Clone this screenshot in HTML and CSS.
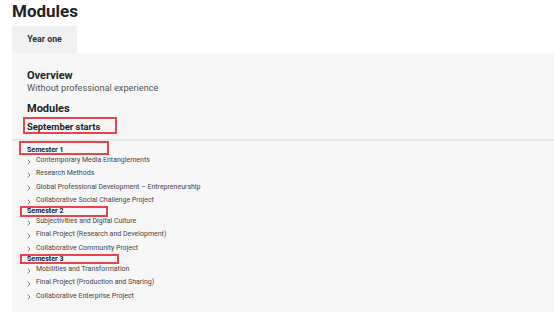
FILE: index.html
```html
<!DOCTYPE html>
<html lang="en">
<head>
    <meta charset="UTF-8">
    <title>Modules</title>
    <link rel="stylesheet" href="styles.css">
</head>
<body>
    <h1 class="page_title">Modules</h1>
    <div class="tabs">
        <div class="tab">Year one</div>
    </div>
    <div class="panel">
        <div class="intro">
            <h2>Overview</h2>
            <p>Without professional experience</p>
            <h3>Modules</h3>
            <h4 class="start">September starts<span class="mark mark_start"></span></h4>
        </div>
        <div class="list">
            <div class="semester">Semester 1<span class="mark mark_s1"></span></div>
            <ul>
                <li><svg class="chev" viewBox="0 0 4 6"><polyline points="0.7,0.7 3,3 0.7,5.3"/></svg>Contemporary Media Entanglements</li>
                <li><svg class="chev" viewBox="0 0 4 6"><polyline points="0.7,0.7 3,3 0.7,5.3"/></svg>Research Methods</li>
                <li><svg class="chev" viewBox="0 0 4 6"><polyline points="0.7,0.7 3,3 0.7,5.3"/></svg>Global Professional Development – Entrepreneurship</li>
                <li><svg class="chev" viewBox="0 0 4 6"><polyline points="0.7,0.7 3,3 0.7,5.3"/></svg>Collaborative Social Challenge Project</li>
            </ul>
            <div class="semester">Semester 2<span class="mark mark_s2"></span></div>
            <ul>
                <li><svg class="chev" viewBox="0 0 4 6"><polyline points="0.7,0.7 3,3 0.7,5.3"/></svg>Subjectivities and Digital Culture</li>
                <li><svg class="chev" viewBox="0 0 4 6"><polyline points="0.7,0.7 3,3 0.7,5.3"/></svg>Final Project (Research and Development)</li>
                <li><svg class="chev" viewBox="0 0 4 6"><polyline points="0.7,0.7 3,3 0.7,5.3"/></svg>Collaborative Community Project</li>
            </ul>
            <div class="semester">Semester 3<span class="mark mark_s3"></span></div>
            <ul>
                <li><svg class="chev" viewBox="0 0 4 6"><polyline points="0.7,0.7 3,3 0.7,5.3"/></svg>Mobilities and Transformation</li>
                <li><svg class="chev" viewBox="0 0 4 6"><polyline points="0.7,0.7 3,3 0.7,5.3"/></svg>Final Project (Production and Sharing)</li>
                <li><svg class="chev" viewBox="0 0 4 6"><polyline points="0.7,0.7 3,3 0.7,5.3"/></svg>Collaborative Enterprise Project</li>
            </ul>
        </div>
    </div>
</body>
</html>
```

FILE: styles.css
```css
*{
    margin:0;padding:0;
    box-sizing: border-box;
}
html,body{
    background-color: #fff;
    color:#222;
    font-family: Roboto, "Liberation Sans", sans-serif;
}
ul,li{
    list-style: none;
}
/* header + tab */
.page_title{
    padding-left: 12px;
    font-size: 17px;
    line-height: 22px;
    font-weight: 700;
    color:#222;
}
.tabs{
    display: flex;
    margin-top: 4px;
    padding-left: 12px;
}
.tab{
    width:65px;
    height:27px;
    line-height: 27px;
    text-align: center;
    font-size: 8.8px;
    font-weight: 700;
    color:#333;
    background-color: #f0f1f3;
}
/* panel */
.panel{
    margin-left: 12px;
    min-height: 260px;
    background-color: #f7f7f7;
}
.intro{
    padding:16px 15px 6px;
}
.intro h2{
    font-size: 11px;
    line-height: 13px;
    font-weight: 700;
}
.intro p{
    font-size: 9.2px;
    line-height: 12px;
    color:#555;
}
.intro h3{
    margin-top: 8px;
    font-size: 11px;
    line-height: 13px;
    font-weight: 700;
}
.start{
    position: relative;
    margin-top: 6px;
    font-size: 9.4px;
    line-height: 12px;
    font-weight: 700;
}
.list{
    border-top:2px solid #e6e6e6;
    padding:5px 15px 20px;
}
.semester{
    position: relative;
    font-size: 7.1px;
    line-height: 8px;
    font-weight: 700;
    color:#222;
}
.list li{
    display: flex;
    align-items: center;
    font-size: 7px;
    line-height: 13.3px;
    color:#464646;
}
.chev{
    width:4px;
    height:6px;
    margin:2px 5px 0 0;
    fill:none;
    stroke:#777;
    stroke-width: 0.9;
}
/* red annotation boxes */
.mark{
    position: absolute;
    border:2px solid #e9434b;
}
.mark_start{
    left:-4px;
    top:-4.5px;
    width:94px;
    height:17px;
}
.mark_s1{
    left:-8px;
    top:-5px;
    width:90px;
    height:14px;
}
.mark_s2{
    left:-7px;
    top:-1.5px;
    width:88px;
    height:11px;
}
.mark_s3{
    left:-7px;
    top:-1px;
    width:99px;
    height:10px;
}
```
